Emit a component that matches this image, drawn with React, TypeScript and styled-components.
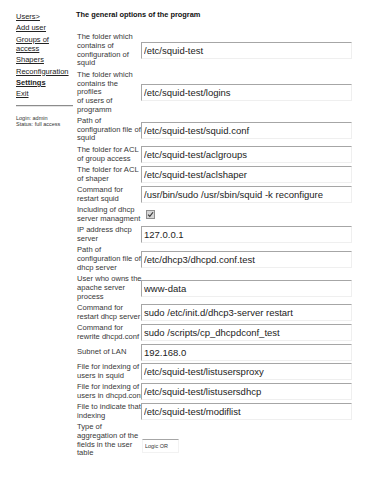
import React from 'react';
import styled, { createGlobalStyle } from 'styled-components';

const GlobalStyle = createGlobalStyle`
  html, body {
    margin: 0;
    padding: 0;
    background: #fff;
  }
  body {
    font-family: "Liberation Sans", Arial, sans-serif;
    color: #222;
  }
`;

type Field = {
  label: string;
  value?: string;
  kind?: 'text' | 'check' | 'select';
};

const MENU = [
  { title: 'Users>' },
  { title: 'Add user' },
  { title: 'Groups of access' },
  { title: 'Shapers' },
  { title: 'Reconfiguration' },
  { title: 'Settings', active: true },
  { title: 'Exit' },
];

const FIELDS: Field[] = [
  { label: 'The folder which\ncontains of\nconfiguration of\nsquid', value: '/etc/squid-test' },
  { label: 'The folder which\ncontains the\nprofiles\nof users of\nprogramm', value: '/etc/squid-test/logins' },
  { label: 'Path of\nconfiguration file of\nsquid', value: '/etc/squid-test/squid.conf' },
  { label: 'The folder for ACL\nof group access', value: '/etc/squid-test/aclgroups' },
  { label: 'The folder for ACL\nof shaper', value: '/etc/squid-test/aclshaper' },
  { label: 'Command for\nrestart squid', value: '/usr/bin/sudo /usr/sbin/squid -k reconfigure' },
  { label: 'Including of dhcp\nserver managment', kind: 'check' },
  { label: 'IP address dhcp\nserver', value: '127.0.0.1' },
  { label: 'Path of\nconfiguration file of\ndhcp server', value: '/etc/dhcp3/dhcpd.conf.test' },
  { label: 'User who owns the\napache server\nprocess', value: 'www-data' },
  { label: 'Command for\nrestart dhcp server', value: 'sudo /etc/init.d/dhcp3-server restart' },
  { label: 'Command for\nrewrite dhcpd.conf', value: 'sudo /scripts/cp_dhcpdconf_test' },
  { label: 'Subnet of LAN', value: '192.168.0' },
  { label: 'File for indexing of\nusers in squid', value: '/etc/squid-test/listusersproxy' },
  { label: 'File for indexing of\nusers in dhcpd.conf', value: '/etc/squid-test/listusersdhcp' },
  { label: 'File to indicate that\nindexing', value: '/etc/squid-test/modiflist' },
  { label: 'Type of\naggregation of the\nfields in the user\ntable', kind: 'select' },
];

const App = () => {
  return (
    <>
      <GlobalStyle />
      <SCpage>
        <SCsidebar>
          <SCmenu>
            {MENU.map((item) => (
              <SCmenuLink key={item.title} href="#" $active={!!item.active}>
                {item.title}
              </SCmenuLink>
            ))}
          </SCmenu>
          <SCrule />
          <SCstatus>
            Login: admin
            <br />
            Status: full access
          </SCstatus>
        </SCsidebar>

        <SCcontent>
          <SCtitle>The general options of the program</SCtitle>
          <SCform>
            {FIELDS.map((f) => (
              <React.Fragment key={f.label}>
                <SClabel>{f.label}</SClabel>
                <SCcell>
                  {f.kind === 'check' ? (
                    <SCcheck>
                      <svg width="7" height="7" viewBox="0 0 10 10">
                        <path d="M1.5 5.2 L4 7.8 L8.6 1.8" fill="none" stroke="#3a3a3a" strokeWidth="1.7" />
                      </svg>
                    </SCcheck>
                  ) : f.kind === 'select' ? (
                    <SCselect defaultValue="or">
                      <option value="or">Logic OR</option>
                      <option value="and">Logic AND</option>
                    </SCselect>
                  ) : (
                    <SCinput type="text" readOnly defaultValue={f.value} />
                  )}
                </SCcell>
              </React.Fragment>
            ))}
          </SCform>
        </SCcontent>
      </SCpage>
    </>
  );
};

const SCpage = styled.div`
  display: flex;
  align-items: flex-start;
  padding: 11px 0 0 16px;
`;

const SCsidebar = styled.div`
  width: 56px;
  flex-shrink: 0;
  padding-top: 1px;
`;

const SCmenu = styled.nav`
  display: flex;
  flex-direction: column;
  align-items: flex-start;
  gap: 1.8px;
`;

const SCmenuLink = styled.a<{ $active: boolean }>`
  font-size: 7.5px;
  line-height: 9.5px;
  color: #222;
  text-decoration: underline;
  font-weight: ${(p) => (p.$active ? 'bold' : 'normal')};
`;

const SCrule = styled.hr`
  margin: 6px 0 0;
  width: 57px;
  border: none;
  border-top: 1px solid #8c8c8c;
  border-bottom: 1px solid #e4e4e4;
  height: 0;
`;

const SCstatus = styled.div`
  margin-top: 8px;
  font-size: 5.5px;
  line-height: 6.5px;
  color: #333;
`;

const SCcontent = styled.div`
  margin-left: 4px;
`;

const SCtitle = styled.div`
  font-size: 7.4px;
  line-height: 8px;
  font-weight: bold;
  color: #111;
  margin-bottom: 13px;
`;

const SCform = styled.div`
  display: grid;
  grid-template-columns: 65px 214px;
  align-items: center;
`;

const SClabel = styled.div`
  padding: 1.35px 0 1.35px 1px;
  font-size: 7.6px;
  line-height: 8.7px;
  white-space: pre;
  color: #383838;
`;

const SCcell = styled.div`
  padding: 1px 0;
  display: flex;
  align-items: center;
`;

const SCinput = styled.input`
  box-sizing: border-box;
  width: 211px;
  height: 17px;
  margin: 0;
  padding: 0 2px;
  font-family: "Liberation Sans", Arial, sans-serif;
  font-size: 9.5px;
  color: #222;
  background: #fff;
  border-style: solid;
  border-width: 1px;
  border-color: #a6a6a6 #efefef #efefef #a6a6a6;
  outline: none;
`;

const SCcheck = styled.span`
  box-sizing: border-box;
  margin-left: 5px;
  width: 9px;
  height: 9px;
  display: flex;
  align-items: center;
  justify-content: center;
  background: #d6d6d6;
  border: 1px solid #8e8e8e;
`;

const SCselect = styled.select`
  appearance: none;
  box-sizing: border-box;
  margin: 10px 0 0 1px;
  width: 37px;
  height: 14px;
  padding: 0 2px;
  font-family: "Liberation Sans", Arial, sans-serif;
  font-size: 5.5px;
  color: #333;
  background: #fff;
  border-style: solid;
  border-width: 1px;
  border-color: #a6a6a6 #f2f2f2 #f2f2f2 #f2f2f2;
  border-radius: 0;
  outline: none;
`;

export default App;
